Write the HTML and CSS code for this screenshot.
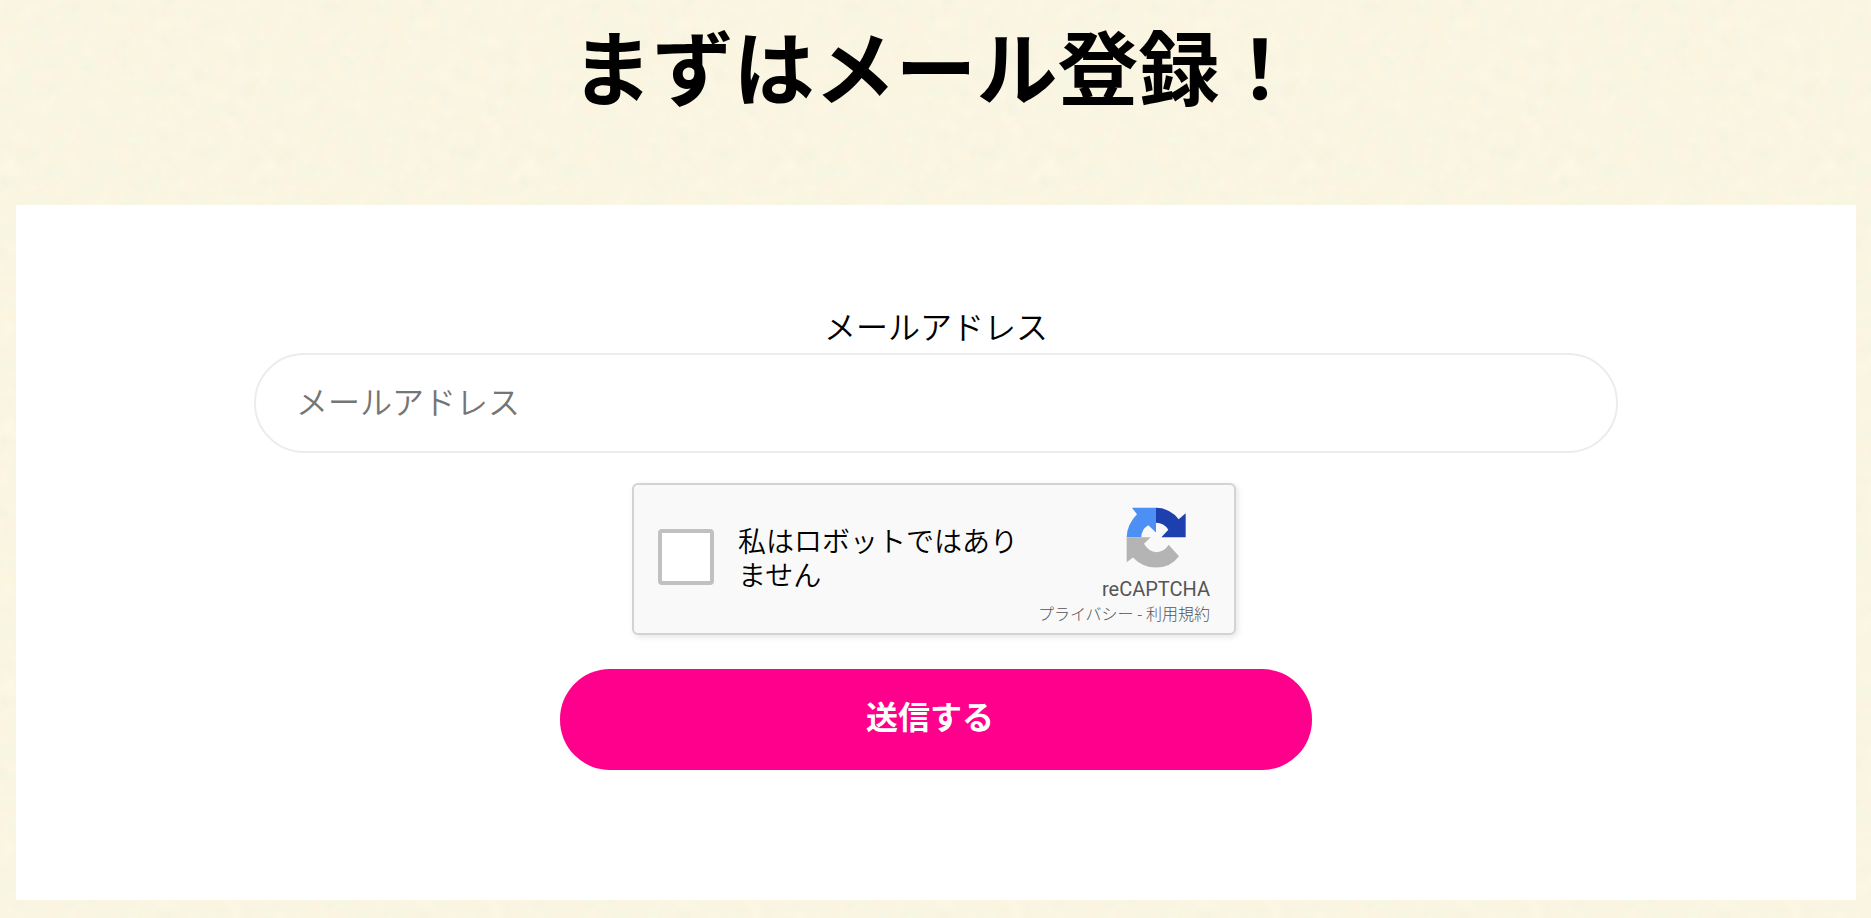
FILE: index.html
```html
<!DOCTYPE html>
<html lang="ja">
<head>
    <meta charset="UTF-8">
    <title>メール登録</title>
    <link rel="stylesheet" href="styles.css">
</head>
<body>
    <h1 class="page-title">まずはメール登録！</h1>

    <form class="register-form">
        <label class="mail-label" for="email">メールアドレス</label>
        <input type="email" class="mail-input" id="email" placeholder="メールアドレス">

        <!-- reCAPTCHA -->
        <div class="captcha">
            <span class="captcha-check"></span>
            <div class="captcha-text">私はロボットではありません</div>
            <div class="captcha-brand">
                <svg class="captcha-logo" viewBox="0 0 180 182">
                    <path fill="#4d90f5" d="M18 2H90V76L67 54Q46 66 46 90H2Q3 51 33 21Z"/>
                    <path fill="#1e3fae" d="M90 2Q131 2 158 36L179 18V90H106L127 68Q114 47 90 47Z"/>
                    <path fill="#b4b4b4" d="M2 90H74L54 110Q68 135 92 135Q114 135 128 113L159 147Q134 181 90 181Q49 181 21 151L2 165Z"/>
                </svg>
                <div class="captcha-name">reCAPTCHA</div>
                <div class="captcha-links">プライバシー - 利用規約</div>
            </div>
        </div>

        <button type="button" class="submit-btn">送信する</button>
    </form>
</body>
</html>
```
FILE: styles.css
```css
* {
    box-sizing: border-box;
}

body {
    margin: 0;
    padding: 0 15px 0 16px;
    height: 918px;
    overflow: hidden;
    font-family: "Noto Sans CJK JP", sans-serif;
    color: #000;
    background-color: #faf5e1;
    /* paper texture */
    background-image: url("data:image/svg+xml,%3Csvg xmlns='http://www.w3.org/2000/svg' width='260' height='260'%3E%3Cfilter id='p' x='0' y='0' width='100%25' height='100%25' color-interpolation-filters='sRGB'%3E%3CfeTurbulence type='fractalNoise' baseFrequency='.06' numOctaves='4' stitchTiles='stitch'/%3E%3CfeColorMatrix values='.05 0 0 0 .953 0 .025 0 0 .949 0 .02 .03 0 .86 0 0 0 0 1'/%3E%3C/filter%3E%3Crect width='260' height='260' filter='url(%23p)'/%3E%3C/svg%3E");
}

.page-title {
    margin: 0;
    height: 205px;
    padding-top: 6px;
    font-size: 81px;
    line-height: 116px;
    font-weight: bold;
    text-align: center;
}

/* 登録フォーム */
.register-form {
    display: flex;
    flex-direction: column;
    align-items: center;
    height: 695px;
    padding-top: 96px;
    background: #fff;
}

.mail-label {
    margin-bottom: 4px;
    font-size: 32px;
    line-height: 48px;
    font-weight: 350;
}

.mail-input {
    width: 1364px;
    height: 100px;
    padding: 0 40px 7px;
    border: 2px solid #ececec;
    border-radius: 50px;
    background: #fff;
    font-family: inherit;
    font-size: 32px;
    font-weight: 350;
    outline: none;
}

    .mail-input::placeholder {
        color: #757575;
    }

/* reCAPTCHA */
.captcha {
    display: flex;
    align-items: center;
    width: 604px;
    height: 152px;
    margin: 30px 4px 34px 0;
    padding: 0 24px 4px;
    border: 2px solid #d3d3d3;
    border-radius: 6px;
    background: #f9f9f9;
    box-shadow: 2px 2px 6px rgba(0, 0, 0, 0.1);
}

.captcha-check {
    width: 56px;
    height: 56px;
    border: 4px solid #c1c1c1;
    border-radius: 4px;
    background: #fff;
}

.captcha-text {
    width: 284px;
    margin-left: 24px;
    font-size: 28px;
    line-height: 34px;
    font-weight: 350;
}

.captcha-brand {
    flex: 1;
    display: flex;
    flex-direction: column;
    align-items: flex-end;
    height: 100%;
    padding-top: 22px;
    color: #555;
    white-space: nowrap;
}

.captcha-logo {
    width: 60px;
    height: 61px;
    margin-right: 24px;
}

.captcha-name {
    margin-top: 9px;
    font-family: Roboto, sans-serif;
    font-size: 20px;
    line-height: 24px;
}

.captcha-links {
    font-size: 16px;
    line-height: 24px;
    font-weight: 300;
}

.submit-btn {
    width: 752px;
    height: 101px;
    padding: 0 12px 9px 0;
    border: none;
    border-radius: 50px;
    background: #ff008c;
    color: #fff;
    font-family: inherit;
    font-size: 32px;
    font-weight: bold;
}
```
